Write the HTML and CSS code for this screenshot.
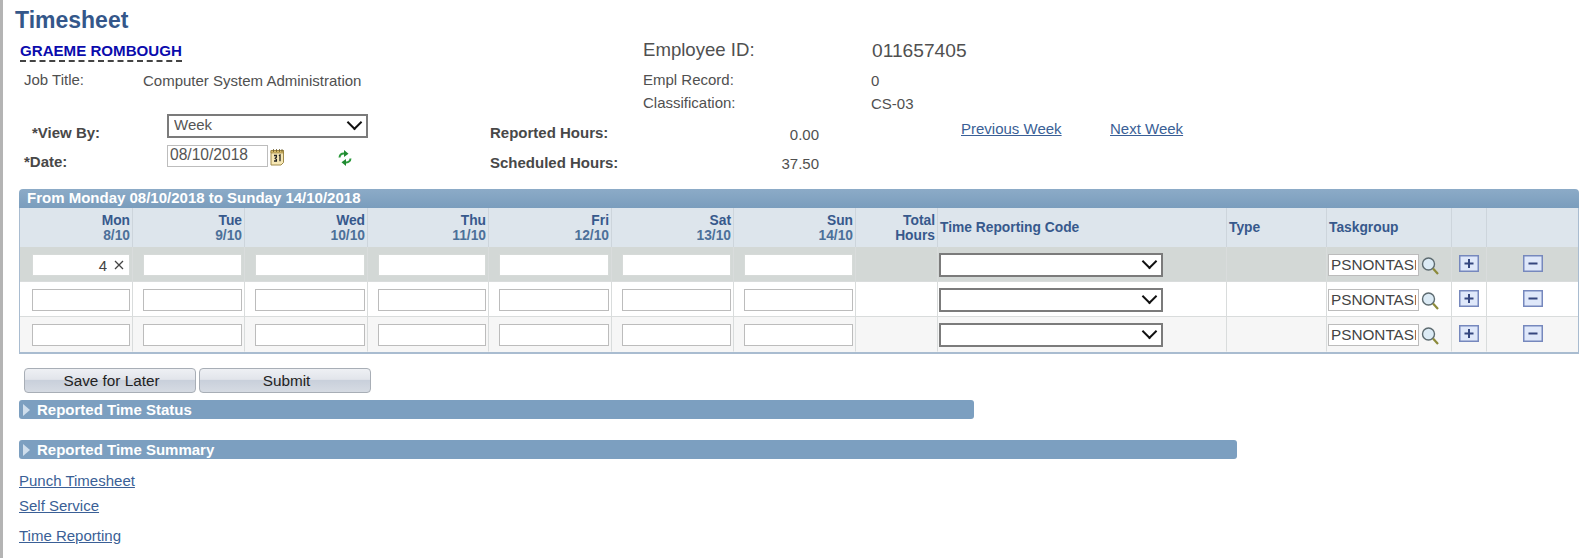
FILE: index.html
```html
<!DOCTYPE html>
<html lang="en">
<head>
  <meta charset="UTF-8">
  <meta name="viewport" content="width=device-width, initial-scale=1.0">
  <link rel="stylesheet" href="styles.css">
  <title>Timesheet</title>
</head>
<body>

<h1 class="page-title">Timesheet</h1>

<div class="info">
  <div class="info-name"><a class="name-link" href="#">GRAEME ROMBOUGH</a></div>
  <div class="info-big">Employee ID:</div>
  <div class="info-big info-id">011657405</div>

  <div class="info-cell">Job Title:</div>
  <div class="info-cell info-low">Computer System Administration</div>
  <div class="info-cell">Empl Record:</div>
  <div class="info-cell info-low">0</div>

  <div class="info-cell"></div>
  <div class="info-cell"></div>
  <div class="info-cell">Classification:</div>
  <div class="info-cell info-low">CS-03</div>
</div>

<div class="filters">
  <label class="filter-label label-view" for="viewBy">*View By:</label>
  <div class="select-wrap view-select">
    <select id="viewBy" class="select-box select-week">
      <option>Week</option>
    </select>
  </div>
  <div class="hours">
    <span class="filter-label">Reported Hours:</span>
    <span class="hours-value">0.00</span>
  </div>
  <div></div>
  <a class="link link-top" href="#">Previous Week</a>
  <a class="link link-top" href="#">Next Week</a>

  <label class="filter-label label-date" for="dateInput">*Date:</label>
  <div class="date-group">
    <input id="dateInput" class="date-input" type="text" value="08/10/2018">
    <svg class="cal-icon" width="16" height="18" viewBox="0 0 16 18">
      <path d="M1 2.5h12.5v12l-2.5 2.5H1z" fill="#f6e7b4" stroke="#a08a4a"/>
      <path d="M1 2.5h12.5v2.5H1z" fill="#d9bd6a" stroke="#8a7436" stroke-width=".6"/>
      <path d="M3.5 1v3M6.5 1v3M9.5 1v3M12 1v3" stroke="#6b5a2a" stroke-width=".8"/>
      <path d="M4 7.5h2.4v1.7l-1.2 1 1.2 1v1.8H4M8.8 7.5l1.2-.5v6.3" fill="none" stroke="#222" stroke-width="1.3"/>
    </svg>
    <svg class="refresh-icon" width="16" height="18" viewBox="0 0 16 18">
      <path d="M2.500 8.500C2.800 5.600 5 4.400 7.500 4.600" fill="none" stroke="#2c9a3c" stroke-width="2"/>
      <path d="M7 1l4.500 3.700L7 8z" fill="#1f8a30"/>
      <path d="M13.500 9.500C13.200 12.400 11 13.600 8.500 13.400" fill="none" stroke="#2c9a3c" stroke-width="2"/>
      <path d="M9 17l-4.500-3.700L9 10z" fill="#1f8a30"/>
    </svg>
  </div>
  <div class="hours hours-second">
    <span class="filter-label">Scheduled Hours:</span>
    <span class="hours-value">37.50</span>
  </div>
</div>

<div class="grid-wrap">
  <div class="grid-title">From Monday 08/10/2018 to Sunday 14/10/2018</div>
  <table class="grid">
    <colgroup>
      <col class="col-first">
      <col class="col-112">
      <col class="col-123">
      <col class="col-121">
      <col class="col-123">
      <col class="col-122">
      <col class="col-122">
      <col class="col-total">
      <col class="col-code">
      <col class="col-type">
      <col class="col-task">
      <col class="col-add">
      <col class="col-del">
    </colgroup>
    <thead>
      <tr>
        <th class="th-right">Mon<br><span class="th-sub">8/10</span></th>
        <th class="th-right">Tue<br><span class="th-sub">9/10</span></th>
        <th class="th-right">Wed<br><span class="th-sub">10/10</span></th>
        <th class="th-right">Thu<br><span class="th-sub">11/10</span></th>
        <th class="th-right">Fri<br><span class="th-sub">12/10</span></th>
        <th class="th-right">Sat<br><span class="th-sub">13/10</span></th>
        <th class="th-right">Sun<br><span class="th-sub">14/10</span></th>
        <th class="th-right">Total<br>Hours</th>
        <th class="th-left">Time Reporting Code</th>
        <th class="th-left">Type</th>
        <th class="th-left">Taskgroup</th>
        <th></th>
        <th></th>
      </tr>
    </thead>
    <tbody>
      <tr class="row-active">
        <td class="day-first">
          <div class="clear-wrap">
            <input class="day-input day-filled" type="text" value="4">
            <svg class="clear-icon" width="10" height="10" viewBox="0 0 10 10"><path d="M1 1l8 8M9 1l-8 8" stroke="#444" stroke-width="1.300"/></svg>
          </div>
        </td>
        <td class="day"><input class="day-input" type="text"></td>
        <td class="day"><input class="day-input" type="text"></td>
        <td class="day"><input class="day-input" type="text"></td>
        <td class="day"><input class="day-input" type="text"></td>
        <td class="day"><input class="day-input" type="text"></td>
        <td class="day"><input class="day-input" type="text"></td>
        <td></td>
        <td class="code"><div class="select-wrap"><select class="select-box"><option></option></select></div></td>
        <td></td>
        <td class="task">
          <div class="task-group">
            <input class="task-input" type="text" value="PSNONTASK">
            <svg class="search-icon" width="18" height="18" viewBox="0 0 18 18"><circle cx="7.500" cy="7" r="6" fill="#dcebf5" stroke="#5d6b70" stroke-width="1.400"/><path d="M12 11.500l5 5.500" stroke="#8c8a3a" stroke-width="2.200"/></svg>
          </div>
        </td>
        <td class="action"><svg class="action-icon" width="20" height="17" viewBox="0 0 20 17"><rect x=".75" y=".75" width="18.500" height="15.500" fill="#dfe8fa" stroke="#7688bd" stroke-width="1.500"/><path d="M10 4v9M5.500 8.500h9" stroke="#35477f" stroke-width="2"/></svg></td>
        <td class="action"><svg class="action-icon" width="20" height="17" viewBox="0 0 20 17"><rect x=".75" y=".75" width="18.500" height="15.500" fill="#dfe8fa" stroke="#7688bd" stroke-width="1.500"/><path d="M5.500 8.500h9" stroke="#35477f" stroke-width="2"/></svg></td>
      </tr>
      <tr class="row-plain">
        <td class="day-first"><input class="day-input" type="text"></td>
        <td class="day"><input class="day-input" type="text"></td>
        <td class="day"><input class="day-input" type="text"></td>
        <td class="day"><input class="day-input" type="text"></td>
        <td class="day"><input class="day-input" type="text"></td>
        <td class="day"><input class="day-input" type="text"></td>
        <td class="day"><input class="day-input" type="text"></td>
        <td></td>
        <td class="code"><div class="select-wrap"><select class="select-box"><option></option></select></div></td>
        <td></td>
        <td class="task">
          <div class="task-group">
            <input class="task-input" type="text" value="PSNONTASK">
            <svg class="search-icon" width="18" height="18" viewBox="0 0 18 18"><circle cx="7.500" cy="7" r="6" fill="#dcebf5" stroke="#5d6b70" stroke-width="1.400"/><path d="M12 11.500l5 5.500" stroke="#8c8a3a" stroke-width="2.200"/></svg>
          </div>
        </td>
        <td class="action"><svg class="action-icon" width="20" height="17" viewBox="0 0 20 17"><rect x=".75" y=".75" width="18.500" height="15.500" fill="#dfe8fa" stroke="#7688bd" stroke-width="1.500"/><path d="M10 4v9M5.500 8.500h9" stroke="#35477f" stroke-width="2"/></svg></td>
        <td class="action"><svg class="action-icon" width="20" height="17" viewBox="0 0 20 17"><rect x=".75" y=".75" width="18.500" height="15.500" fill="#dfe8fa" stroke="#7688bd" stroke-width="1.500"/><path d="M5.500 8.500h9" stroke="#35477f" stroke-width="2"/></svg></td>
      </tr>
      <tr class="row-alt">
        <td class="day-first"><input class="day-input" type="text"></td>
        <td class="day"><input class="day-input" type="text"></td>
        <td class="day"><input class="day-input" type="text"></td>
        <td class="day"><input class="day-input" type="text"></td>
        <td class="day"><input class="day-input" type="text"></td>
        <td class="day"><input class="day-input" type="text"></td>
        <td class="day"><input class="day-input" type="text"></td>
        <td></td>
        <td class="code"><div class="select-wrap"><select class="select-box"><option></option></select></div></td>
        <td></td>
        <td class="task">
          <div class="task-group">
            <input class="task-input" type="text" value="PSNONTASK">
            <svg class="search-icon" width="18" height="18" viewBox="0 0 18 18"><circle cx="7.500" cy="7" r="6" fill="#dcebf5" stroke="#5d6b70" stroke-width="1.400"/><path d="M12 11.500l5 5.500" stroke="#8c8a3a" stroke-width="2.200"/></svg>
          </div>
        </td>
        <td class="action"><svg class="action-icon" width="20" height="17" viewBox="0 0 20 17"><rect x=".75" y=".75" width="18.500" height="15.500" fill="#dfe8fa" stroke="#7688bd" stroke-width="1.500"/><path d="M10 4v9M5.500 8.500h9" stroke="#35477f" stroke-width="2"/></svg></td>
        <td class="action"><svg class="action-icon" width="20" height="17" viewBox="0 0 20 17"><rect x=".75" y=".75" width="18.500" height="15.500" fill="#dfe8fa" stroke="#7688bd" stroke-width="1.500"/><path d="M5.500 8.500h9" stroke="#35477f" stroke-width="2"/></svg></td>
      </tr>
    </tbody>
  </table>
</div>

<div class="btn-row">
  <button class="btn">Save for Later</button>
  <button class="btn">Submit</button>
</div>

<div class="section-bar bar-status">
  <svg width="8" height="12" viewBox="0 0 8 12"><path d="M0 0l7 6-7 6z" fill="#cfdeec"/></svg>
  <span>Reported Time Status</span>
</div>
<div class="section-bar bar-summary">
  <svg width="8" height="12" viewBox="0 0 8 12"><path d="M0 0l7 6-7 6z" fill="#cfdeec"/></svg>
  <span>Reported Time Summary</span>
</div>

<div class="bottom-links">
  <a class="link" href="#">Punch Timesheet</a>
  <a class="link" href="#">Self Service</a>
  <a class="link link-last" href="#">Time Reporting</a>
</div>

</body>
</html>
```

FILE: styles.css
```css
html, body {
  margin: 0;
  padding: 0;
}
body {
  font-family: "Liberation Sans", Arial, sans-serif;
  font-size: 15px;
  color: #505050;
  background: #fff;
  border-left: 3px solid #b4b4b4;
  height: 558px;
  box-sizing: border-box;
  overflow: hidden;
}
.page-title {
  margin: 0;
  padding: 7px 0 0 12px;
  font-size: 23px;
  line-height: 26px;
  font-weight: bold;
  color: #34578a;
}

/* employee block */
.info {
  display: grid;
  grid-template-columns: 119px 500px 228px 1fr;
  grid-template-rows: 32px 23px 21px;
  padding: 5px 0 0 21px;
}
.info-name {
  grid-column: 1 / 3;
  margin-left: -4px;
}
.name-link {
  display: inline-block;
  padding-top: 3px;
  font-size: 15.100px;
  line-height: 19px;
  font-weight: bold;
  color: #0b0bad;
  text-decoration: none;
  border-bottom: 2px dashed #444;
}
.info-big {
  font-size: 18.600px;
  line-height: 24px;
}
.info-id {
  margin-left: 1px;
  padding-top: 1px;
  font-size: 19.200px;
}
.info-cell {
  line-height: 20px;
}
.info-low {
  padding-top: 1px;
}

/* view by / date */
.filters {
  display: grid;
  grid-template-columns: 144px 322px 329px 142px 149px 1fr;
  grid-template-rows: 31px 25px;
  padding-left: 21px;
}
.filter-label {
  font-weight: bold;
  line-height: 17px;
  color: #484848;
}
.label-view {
  padding: 10px 0 0 8px;
}
.label-date {
  padding-top: 8px;
}
.view-select {
  margin: 0 0 0 -1px;
  width: 201px;
}
.select-wrap {
  position: relative;
  height: 24px;
}
/* chevron sits over the select */
.select-wrap::after {
  content: "";
  position: absolute;
  right: 8px;
  top: 3px;
  width: 9px;
  height: 9px;
  border-right: 2px solid #111;
  border-bottom: 2px solid #111;
  transform: rotate(45deg);
  pointer-events: none;
}
.select-box {
  appearance: none;
  display: block;
  width: 100%;
  height: 24px;
  box-sizing: border-box;
  margin: 0;
  padding: 0 0 3px 5px;
  font: 15px "Liberation Sans", Arial, sans-serif;
  color: #555;
  background: #fff;
  border: 2px solid #7b7b7b;
  border-radius: 0;
}
.date-group {
  display: flex;
  align-items: flex-start;
  margin-left: -1px;
}
.date-input {
  width: 101px;
  height: 22px;
  box-sizing: border-box;
  margin: 0;
  padding: 0 0 3px 2px;
  font: 15.600px "Liberation Sans", Arial, sans-serif;
  color: #555;
  border: 1px solid #bdbdbd;
}
.cal-icon {
  margin: 3px 0 0 2px;
}
.refresh-icon {
  margin: 4px 0 0 51px;
}
.hours {
  display: flex;
  justify-content: space-between;
}
.hours .filter-label {
  padding-top: 10px;
}
.hours-value {
  padding-top: 12px;
  line-height: 17px;
}
.hours-second .filter-label {
  padding-top: 9px;
}
.hours-second .hours-value {
  padding-top: 10px;
}
.link {
  color: #3a5f96;
  text-decoration: underline;
  line-height: 17px;
}
.link-top {
  padding-top: 6px;
  justify-self: start;
}

/* timesheet grid */
.grid-wrap {
  margin: 19px 0 0 16px;
  width: 1560px;
}
.grid-title {
  height: 19px;
  line-height: 18px;
  padding-left: 8px;
  font-size: 15px;
  font-weight: bold;
  color: #fff;
  background: linear-gradient(#8cabc7, #7a9dbd);
  border-radius: 4px 4px 0 0;
}
.grid {
  table-layout: fixed;
  width: 1560px;
  border-collapse: separate;
  border-spacing: 0;
  border: 1px solid #a9bcd0;
  border-top: 0;
  border-bottom-width: 2px;
}
.col-first { width: 113px; }
.col-112 { width: 112px; }
.col-123 { width: 123px; }
.col-122 { width: 122px; }
.col-121 { width: 121px; }
.col-total { width: 82px; }
.col-code { width: 289px; }
.col-type { width: 100px; }
.col-task { width: 125px; }
.col-add { width: 35px; }
.grid th {
  height: 39px;
  box-sizing: border-box;
  padding: 0 2px;
  font-size: 13.800px;
  line-height: 15px;
  color: #37598c;
  background: #dde5ec;
  border-right: 1px solid #cdd5dc;
}
.grid td {
  height: 35px;
  box-sizing: border-box;
  padding: 2px 0 0;
  border-right: 1px solid #d9dcdc;
  border-bottom: 1px solid #d9dcdc;
}
.grid th:last-child,
.grid td:last-child {
  border-right: 0;
}
.th-right {
  text-align: right;
}
.th-left {
  text-align: left;
}
.th-sub {
  color: #4c7099;
}
.row-active td {
  background: #d3d8d6;
}
.row-plain td {
  background: #fff;
}
.row-alt td {
  background: #f6f6f6;
  border-bottom-color: #f6f6f6;
}
.grid .day-first {
  padding: 2px 2px 0 12px;
}
.grid .day {
  padding: 2px 2px 0 10px;
}
.day-input {
  display: block;
  width: 100%;
  height: 22px;
  box-sizing: border-box;
  margin: 0;
  padding: 0 3px;
  font: 15px "Liberation Sans", Arial, sans-serif;
  color: #444;
  background: #fff;
  border: 1px solid #bcbcbc;
}
.row-active .day-input {
  border-color: #d6dad8;
}
.clear-wrap {
  position: relative;
}
.day-filled {
  padding-right: 22px;
  text-align: right;
}
.clear-icon {
  position: absolute;
  right: 6px;
  top: 6px;
}
.grid .code {
  padding: 2px 63px 0 1px;
}
.grid .task {
  padding: 2px 0 0 1px;
}
.task-group {
  display: flex;
  align-items: flex-start;
}
.task-input {
  width: 91px;
  height: 22px;
  box-sizing: border-box;
  margin: 0;
  padding: 0 2px;
  font: 15.300px "Liberation Sans", Arial, sans-serif;
  color: #444;
  background: #fff;
  border: 1px solid #bcbcbc;
}
.search-icon {
  margin: 3px 0 0 2px;
}
.grid .action {
  text-align: center;
}
.action-icon {
  display: inline-block;
  vertical-align: middle;
  margin-top: -6px;
}

/* buttons and collapsed sections */
.btn-row {
  display: flex;
  gap: 3px;
  margin: 14px 0 0 21px;
}
.btn {
  width: 172px;
  height: 25px;
  padding: 0 0 0 3px;
  font: 15.300px "Liberation Sans", Arial, sans-serif;
  color: #222;
  border: 1px solid #a8aeb6;
  border-radius: 4px;
  background: linear-gradient(#eef0f4 0, #e2e5eb 45%, #c9d0db 50%, #d6dbe3 100%);
}
.section-bar {
  display: flex;
  align-items: center;
  gap: 6px;
  margin-left: 16px;
  height: 19px;
  padding-left: 4px;
  font-size: 15px;
  font-weight: bold;
  color: #fff;
  background: #7c9fc0;
  border-radius: 3px;
}
.bar-status {
  margin-top: 7px;
  width: 951px;
}
.bar-summary {
  margin-top: 21px;
  width: 1214px;
}
.bottom-links {
  display: flex;
  flex-direction: column;
  align-items: flex-start;
  gap: 8px;
  margin: 13px 0 0 16px;
}
.link-last {
  margin-top: 5px;
}
```
